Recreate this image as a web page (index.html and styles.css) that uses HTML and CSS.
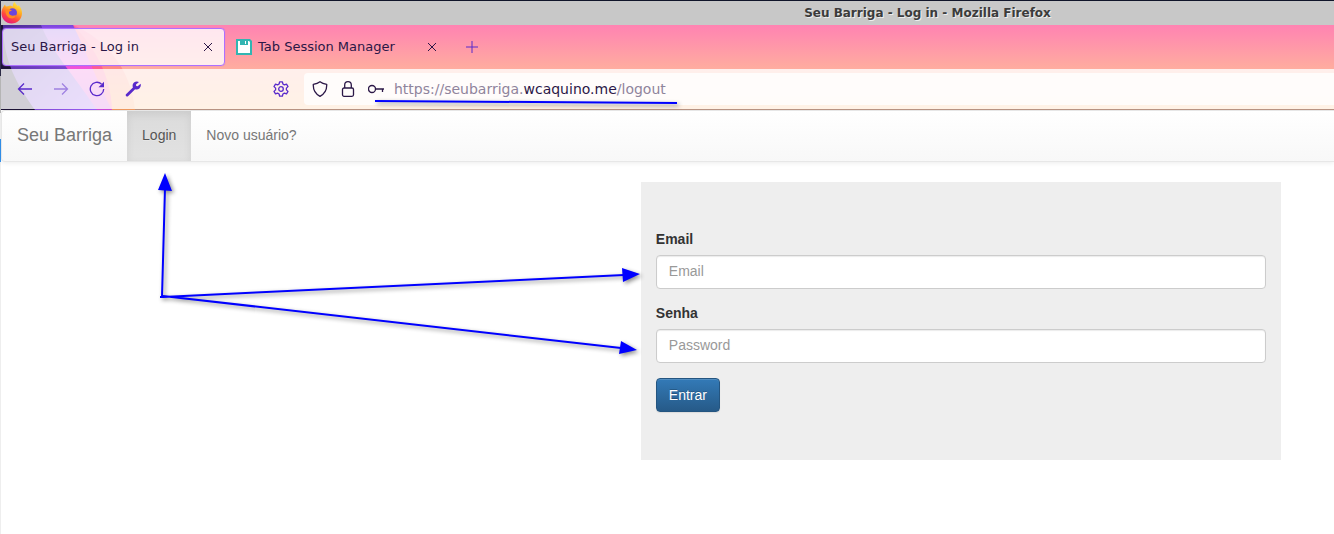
FILE: index.html
```html
<!DOCTYPE html>
<html lang="pt-BR">
<head>
<meta charset="utf-8">
<title>Seu Barriga - Log in</title>
<link rel="stylesheet" href="styles.css">
</head>
<body>
<div class="window">
  <header class="titlebar">
    <svg class="firefox" viewBox="0 0 22 22" aria-hidden="true">
      <defs>
        <linearGradient id="flame" x1="0.8" y1="0" x2="0.3" y2="1"><stop offset="0" stop-color="#fff04a"/><stop offset="0.4" stop-color="#ffa820"/><stop offset="0.7" stop-color="#ff4a3c"/><stop offset="1" stop-color="#e31587"/></linearGradient>
      </defs>
      <path fill="url(#flame)" d="M2.600 4.500 4 2.500l.8 2L7 4.200l2-.6 2.800 1c0-2.600.6-3.400 2-4.600.5 2.200 1.900 2.600 3.200 4.200l.7-1.200C20.300 6 21 8.500 21 11.300 21 17 16.500 21.500 10.700 21.500S.5 17 .5 11.300C.5 8.700 1.200 6.400 2.600 4.500z"/>
      <circle cx="11.500" cy="10.800" r="4.500" fill="#6b45dc"/>
      <path fill="#ff8a22" d="M4.500 7.500c2-1 4.500-.6 6.500 1l-3 1.200c-.5 2 1 3.700 3.500 4 1.500 0 2.300-.6 3.500-.3-1 2.500-3 3.400-5.300 2.900C6 15.600 4 11.500 4.500 7.500z"/>
    </svg>
    <span class="window-title">Seu Barriga - Log in - Mozilla Firefox</span>
  </header>
  <div class="chrome">
    <svg class="theme" viewBox="0 0 150 85" aria-hidden="true">
      <defs>
        <linearGradient id="violet" x1="0" y1="0" x2="1" y2="1"><stop offset="0" stop-color="#4a2a96"/><stop offset="1" stop-color="#9c5cf4"/></linearGradient>
        <linearGradient id="magenta" x1="0" y1="0" x2="0" y2="1"><stop offset="0" stop-color="#7d48e0"/><stop offset="0.5" stop-color="#f254d8"/><stop offset="1" stop-color="#c94ad8"/></linearGradient>
        <linearGradient id="coral" x1="0" y1="0" x2="0" y2="1"><stop offset="0" stop-color="#ff62a6"/><stop offset="1" stop-color="#ff9a52"/></linearGradient>
      </defs>
      <path fill="url(#coral)" fill-opacity="0.75" d="M72 0C105 14 130 44 134 85H0V0z"/>
      <path fill="#ff5e92" d="M72 0C92 20 110 50 111 85H0V0z"/>
      <path fill="url(#magenta)" d="M72 0C84 24 96 56 111 85H0V0z"/>
      <path fill="url(#violet)" d="M40 0C50 26 73 50 96 85H0V0z"/>
      <path fill="#1c1236" d="M0 0H2C2 35 16 60 34 85H0z"/>
    </svg>
    <nav class="tabs" aria-label="Abas">
      <div class="tab tab-active"><span class="tab-label">Seu Barriga - Log in</span>
        <button class="close" aria-label="Fechar aba"><svg viewBox="0 0 10 10"><path d="M1 1l8 8M9 1L1 9"/></svg></button></div>
      <div class="tab"><svg class="disk" viewBox="0 0 16 16" aria-hidden="true"><path fill="#32b5b2" d="M0 0h14l2 2v14H0z"/><path fill="#fff" d="M2 2h2v4h8V2h1l1 1v11H2zM9 2h1v3H9z"/></svg><span class="tab-label">Tab Session Manager</span>
        <button class="close" aria-label="Fechar aba"><svg viewBox="0 0 10 10"><path d="M1 1l8 8M9 1L1 9"/></svg></button></div>
      <button class="new-tab" aria-label="Nova aba"><svg viewBox="0 0 12 12"><path d="M6 0v12M0 6h12"/></svg></button>
    </nav>
    <div class="toolbar">
      <div class="tools">
        <button class="tool" aria-label="Voltar"><svg viewBox="0 0 16 16"><path d="M15 8H2M7 2.500L1.500 8 7 13.500"/></svg></button>
        <button class="tool" aria-label="Avançar" disabled><svg viewBox="0 0 16 16"><path d="M1 8h13M9 2.500L14.500 8 9 13.500"/></svg></button>
        <button class="tool" aria-label="Recarregar"><svg viewBox="0 0 16 16"><path d="M12.500 3A6.700 6.700 0 1 0 14.700 8"/><path class="solid" d="M15 .8V6.200H9.500z"/></svg></button>
        <button class="tool" aria-label="Ferramentas"><svg viewBox="0 0 16 16"><path class="solid" d="M9 1.500C10.500.3 12.500.2 14 1L11 3.500l.2 1.500 1.500.2L15.600 2.700c.5 1.700.1 3.500-1.200 4.700-1.200 1-2.800 1.300-4.300.8L3 15.200c-1.200 1.200-3.200-.8-2-2L7.900 6.400C7.300 4.500 7.600 2.800 9 1.500z"/></svg></button>
      </div>
      <button class="tool" aria-label="Configurações"><svg viewBox="0 0 16 16"><circle cx="8" cy="8" r="2.300"/><path stroke-linejoin="round" d="M6.600.8h2.800l.5 2.200 1.500.9 2.100-.7 1.500 2.400L13.400 7.100v1.800L15 10.400l-1.500 2.400-2.100-.7-1.500.9-.5 2.200H6.600L6.100 13l-1.500-.9-2.100.7L1 10.400l1.600-1.500V7.100L1 5.600l1.500-2.400 2.100.7L6.100 3z"/></svg></button>
      <div class="address">
        <svg viewBox="0 0 16 16"><path stroke-linejoin="round" d="M8 .7c2 1.500 4.200 2.200 6.700 2.700C15 9 12.500 13 8 15.400 3.500 13 1 9 1.300 3.400 3.800 2.900 6 2.200 8 .7z"/></svg>
        <svg viewBox="0 0 16 16"><rect x="2.500" y="7" width="11" height="8.300" rx="1.500"/><path d="M4.700 7V4a3.300 3.300 0 0 1 6.600 0v3"/></svg>
        <svg viewBox="0 0 16 16"><circle cx="4" cy="8" r="3.500"/><path d="M7.500 8H16M14.500 8v3"/></svg>
        <span class="url">https://seubarriga.<b>wcaquino.me</b>/logout</span>
      </div>
    </div>
  </div>
  <nav class="navbar">
    <a class="brand" href="#">Seu Barriga</a>
    <a class="link link-active" href="#">Login</a>
    <a class="link" href="#">Novo usuário?</a>
  </nav>
  <main class="page">
    <form class="login">
      <label for="email">Email</label>
      <input id="email" type="email" placeholder="Email">
      <label for="password">Senha</label>
      <input id="password" type="password" placeholder="Password">
      <button class="submit" type="button">Entrar</button>
    </form>
  </main>
  <svg class="marks" width="700" height="370" viewBox="0 0 700 370" aria-hidden="true">
    <g fill="none" stroke="#00f" stroke-width="2">
      <path d="M375 101L677 103M160 297h5M162 297L165 188M163 297L624 275M163 296L621 348"/>
    </g>
    <path fill="#00f" d="M165 173l7 18-14-1zM640 274l-18-6 1 14zM637 350l-16-9-2 13z"/>
  </svg>
</div>
</body>
</html>
```
FILE: styles.css
```css
* { box-sizing: border-box; }
body { margin: 0; background: #fff; color: #333; font: 14px/20px "Liberation Sans", Arial, sans-serif; }
button { border: 0; background: none; padding: 0; font: inherit; color: inherit; }
svg { display: block; flex: none; }
.window { position: relative; min-height: 100vh; padding-left: 1px; background: linear-gradient(#2b2b45 76px, #b5b5b5 76px 113px, #f4f4f4 113px 139px, #3392ee 139px 162px, #eee 162px) left top / 1px 100% no-repeat; }
.titlebar { display: flex; align-items: center; height: 25px; border-top: 1px solid #10152a; background: #c8c8c8; }
.firefox { width: 22px; height: 22px; }
.window-title { flex: 1; padding-left: 498px; text-align: center; color: #3b3b3b; font: bold 12px/20px "DejaVu Sans", sans-serif; text-shadow: 1px 1px #eee; }
.chrome { position: relative; background: linear-gradient(#ff83b2, #ffad9f 44px, #ffbd80 84px); color: #2b1747; font: 14px/20px "DejaVu Sans", sans-serif; border-bottom: 1px solid #b89382; }
.theme { position: absolute; left: 0; top: 0; width: 150px; height: 85px; }
.tabs { position: relative; display: flex; align-items: center; gap: 1px; height: 44px; padding-left: 1px; font-size: 13px; }
.tab { display: flex; align-items: center; width: 223px; height: 38px; padding: 0 8px; border: 1px solid transparent; border-radius: 4px; }
.tab-active { background: rgba(255, 255, 255, 0.8); border-color: #ac70ff; box-shadow: 0 0 1px #ac70ff; }
.tab-label { flex: 1; white-space: nowrap; }
.disk { width: 16px; height: 16px; margin: 0 6px 0 1px; }
.close { padding: 3px; }
.close svg { width: 10px; height: 10px; fill: none; stroke: #2b1747; stroke-width: 1; }
.new-tab { padding: 0 16px; }
.new-tab svg { width: 12px; height: 12px; fill: none; stroke: #592acb; stroke-width: 1; }
.toolbar { position: relative; display: flex; align-items: center; height: 40px; padding-left: 16px; background: rgba(255, 255, 255, 0.8); }
.tools { display: flex; gap: 20px; width: 256px; }
.tool svg { width: 16px; height: 16px; fill: none; stroke: #592acb; stroke-width: 1.3; }
.tool .solid { fill: #592acb; stroke: none; }
.tool:disabled { opacity: 0.5; }
.address { flex: 1; display: flex; align-items: center; gap: 12px; height: 32px; margin-left: 15px; padding-left: 8px; border-radius: 4px 0 0 4px; background: rgba(255, 255, 255, 0.8); }
.address svg { width: 16px; height: 16px; fill: none; stroke: #2b1747; stroke-width: 1.3; }
.url { color: #8f849c; white-space: nowrap; margin-left: -2px; }
.url b { font-weight: 400; color: #2b1747; }
.navbar { display: flex; height: 52px; border: 1px solid #e7e7e7; border-right: 0; border-radius: 4px 0 0 4px; background: linear-gradient(#fff, #f8f8f8); box-shadow: 0 1px 5px rgba(0, 0, 0, 0.08); }
.brand, .link { padding: 14px 15px; color: #777; text-decoration: none; text-shadow: 0 1px rgba(255, 255, 255, 0.25); }
.brand { font-size: 18px; }
.link-active { color: #555; background: linear-gradient(#dbdbdb, #e2e2e2); box-shadow: inset 0 3px 9px rgba(0, 0, 0, 0.08); }
.page { padding: 20px 4% 20px 48%; }
.login { padding: 47px 15px 48px; background: #eee; }
.login label { display: block; margin-bottom: 6px; font-weight: 700; }
.login input { display: block; width: 100%; height: 34px; margin-bottom: 14px; padding: 5px 12px 7px; border: 1px solid #ccc; border-radius: 4px; background: #fff; box-shadow: inset 0 1px 1px rgba(0, 0, 0, 0.08); font: inherit; }
.login input::placeholder { color: #999; opacity: 1; }
.submit { display: block; height: 34px; margin-top: 15px; padding: 0 12px; border: 1px solid #245580; border-radius: 4px; color: #fff; background: linear-gradient(#337ab7, #265a88); text-shadow: 0 -1px rgba(0, 0, 0, 0.2); box-shadow: inset 0 1px rgba(255, 255, 255, 0.15), 0 1px 1px rgba(0, 0, 0, 0.08); }
.marks { position: absolute; left: 0; top: 0; pointer-events: none; filter: drop-shadow(2px 2px 2px rgba(0, 0, 0, 0.45)); }
```
